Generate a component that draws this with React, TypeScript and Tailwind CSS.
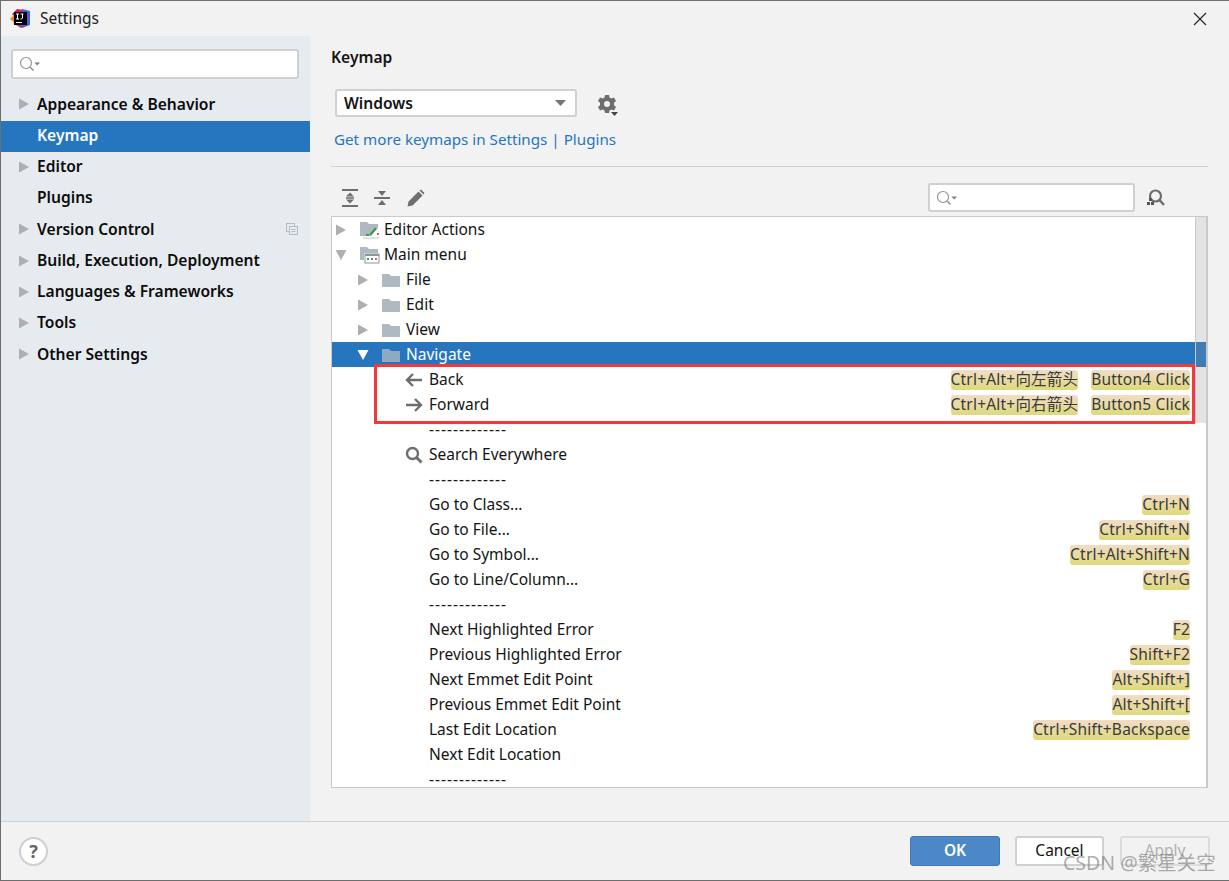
const uiFont = "font-['Noto_Sans','Noto_Sans_CJK_SC',sans-serif]";

const sidebarItems = [
  { label: "Appearance & Behavior", arrow: true },
  { label: "Keymap", selected: true },
  { label: "Editor", arrow: true },
  { label: "Plugins" },
  { label: "Version Control", arrow: true, copy: true },
  { label: "Build, Execution, Deployment", arrow: true },
  { label: "Languages & Frameworks", arrow: true },
  { label: "Tools", arrow: true },
  { label: "Other Settings", arrow: true },
];

type Row = {
  label: string;
  level: 0 | 1 | 2;
  arrow?: "right" | "down";
  icon?: "actions" | "menu" | "folder" | "back" | "forward" | "search";
  selected?: boolean;
  keys?: string[];
};

const rows: Row[] = [
  { label: "Editor Actions", level: 0, arrow: "right", icon: "actions" },
  { label: "Main menu", level: 0, arrow: "down", icon: "menu" },
  { label: "File", level: 1, arrow: "right", icon: "folder" },
  { label: "Edit", level: 1, arrow: "right", icon: "folder" },
  { label: "View", level: 1, arrow: "right", icon: "folder" },
  { label: "Navigate", level: 1, arrow: "down", icon: "folder", selected: true },
  { label: "Back", level: 2, icon: "back", keys: ["Ctrl+Alt+向左箭头", "Button4 Click"] },
  { label: "Forward", level: 2, icon: "forward", keys: ["Ctrl+Alt+向右箭头", "Button5 Click"] },
  { label: "-------------", level: 2 },
  { label: "Search Everywhere", level: 2, icon: "search" },
  { label: "-------------", level: 2 },
  { label: "Go to Class...", level: 2, keys: ["Ctrl+N"] },
  { label: "Go to File...", level: 2, keys: ["Ctrl+Shift+N"] },
  { label: "Go to Symbol...", level: 2, keys: ["Ctrl+Alt+Shift+N"] },
  { label: "Go to Line/Column...", level: 2, keys: ["Ctrl+G"] },
  { label: "-------------", level: 2 },
  { label: "Next Highlighted Error", level: 2, keys: ["F2"] },
  { label: "Previous Highlighted Error", level: 2, keys: ["Shift+F2"] },
  { label: "Next Emmet Edit Point", level: 2, keys: ["Alt+Shift+]"] },
  { label: "Previous Emmet Edit Point", level: 2, keys: ["Alt+Shift+["] },
  { label: "Last Edit Location", level: 2, keys: ["Ctrl+Shift+Backspace"] },
  { label: "Next Edit Location", level: 2 },
  { label: "-------------", level: 2 },
];

function Arrow({ dir, light }: { dir: "right" | "down"; light?: boolean }) {
  return (
    <svg width="12" height="12" viewBox="0 0 12 12">
      <path d={dir === "right" ? "M1 0.5 L11 6 L1 11.5Z" : "M0.5 1 L11.5 1 L6 11Z"} fill={light ? "#ffffff" : "#afafaf"} />
    </svg>
  );
}

function SearchBox({ className }: { className: string }) {
  return (
    <div className={`flex items-center rounded-[3px] border-2 border-[#d0d0d0] bg-white pl-[6px] ${className}`}>
      <svg width="22" height="18" viewBox="0 0 22 18" fill="none">
        <circle cx="7" cy="8" r="5.5" stroke="#8d969c" strokeWidth="1.2" />
        <path d="M11 12 L14.5 15.5" stroke="#8d969c" strokeWidth="1.6" />
        <path d="M15.5 7.5 H21 L18.2 10.5Z" fill="#7f7f7f" />
      </svg>
    </div>
  );
}

function TreeIcon({ icon, selected }: { icon: NonNullable<Row["icon"]>; selected?: boolean }) {
  if (icon === "folder") {
    return (
      <svg width="18" height="16" viewBox="0 0 18 16">
        <path d="M0 2 H7 L9 4 H18 V15 H0Z" fill={selected ? "#8fa9c2" : "#aeb9c0"} />
      </svg>
    );
  }
  if (icon === "actions") {
    return (
      <svg width="20" height="18" viewBox="0 0 20 18" fill="none">
        <path d="M0 1 H7 L9 3 H18 V7 L11 15 H0Z" fill="#aeb9c0" />
        <path d="M6 14 L9 14 M10 14 L16 7" stroke="#3d9c48" strokeWidth="2" />
        <path d="M17 12 H19 V14 H17Z" fill="#e0703a" />
        <path d="M3 17 H19" stroke="#c0c6ca" strokeWidth="1" />
      </svg>
    );
  }
  if (icon === "menu") {
    return (
      <svg width="20" height="18" viewBox="0 0 20 18" fill="none">
        <path d="M0 1 H7 L9 3 H18 V7 H4 V14 H0Z" fill="#aeb9c0" />
        <rect x="5" y="8" width="14" height="9" fill="#ffffff" stroke="#8d969c" />
        <path d="M5 8 H19 V10 H5Z" fill="#8d969c" />
        <rect x="7" y="12" width="2" height="2" fill="#3d9c48" />
        <rect x="11" y="12" width="2" height="2" fill="#4a86c8" />
        <rect x="15" y="12" width="2" height="2" fill="#e0703a" />
      </svg>
    );
  }
  if (icon === "search") {
    return (
      <svg width="18" height="18" viewBox="0 0 18 18" fill="none" stroke="#6e6e6e">
        <circle cx="7.5" cy="7.5" r="5.5" strokeWidth="2.4" />
        <path d="M11.5 11.5 L16.5 16.5" strokeWidth="3" />
      </svg>
    );
  }
  return (
    <svg width="18" height="14" viewBox="0 0 18 14" fill="none" stroke="#6e6e6e" strokeWidth="2.4">
      {icon === "back" ? <path d="M17 7 H2 M8 1 L2 7 L8 13" /> : <path d="M1 7 H16 M10 1 L16 7 L10 13" />}
    </svg>
  );
}

function TreeRow({ row }: { row: Row }) {
  const indent = row.level === 0 ? "pl-0" : row.level === 1 ? "pl-[22px]" : "pl-[45px]";
  const isSeparator = row.label.startsWith("-");
  return (
    <div className={`flex h-[25px] shrink-0 items-center pr-[5px] ${indent} ${row.selected ? "-mr-[12px] bg-[#2675bf] text-white" : "text-[#141414]"}`}>
      <span className="flex w-[22px] shrink-0 justify-center pr-[4px]">
        {row.arrow && <Arrow dir={row.arrow} light={row.selected} />}
      </span>
      <span className="flex w-[30px] shrink-0 items-center justify-start pl-[6px]">
        {row.icon && <TreeIcon icon={row.icon} selected={row.selected} />}
      </span>
      <span className={`flex-1 whitespace-nowrap ${isSeparator ? "tracking-[1px]" : ""}`}>{row.label}</span>
      {row.keys && (
        <span className="flex gap-[13px]">
          {row.keys.map((k) => (
            <span key={k} className="h-[20px] whitespace-nowrap rounded-[3px] bg-gradient-to-b from-[#f2dcc6] to-[#ded97a] leading-[19px] tracking-[0.2px] text-[#3a3a3a]">
              {k}
            </span>
          ))}
        </span>
      )}
    </div>
  );
}

export default function App() {
  return (
    <div className={`relative flex h-[881px] w-[1229px] flex-col overflow-hidden border-y border-l border-[#6e6e6e] bg-[#f2f2f2] text-[15.5px] text-[#141414] ${uiFont}`}>
      <div className="flex h-[35px] shrink-0 items-center bg-[#f2f2f2] pl-[9px] pr-[22px]">
        <svg width="21" height="21" viewBox="0 0 21 21">
          <path d="M2 6 L7 1 L14 2 L8 12Z" fill="#e3145f" />
          <path d="M12 1 L20 3 L20 17 L12 20Z" fill="#3f63d8" />
          <path d="M0 11 L4 7 L6 16Z" fill="#f58220" />
          <path d="M3 15 L11 20 L15 18Z" fill="#b32a8f" />
          <rect x="4" y="4" width="13" height="13" fill="#000000" />
          <rect x="6" y="14" width="6" height="1" fill="#ffffff" />
          <path d="M6 6 H9 M7.5 6 V11 M6 11 H9 M10.5 6 H13.5 M12.5 6 V10 Q12.5 11 10.5 11" stroke="#ffffff" strokeWidth="1" fill="none" />
        </svg>
        <span className="ml-[9px] flex-1 text-[#222222]">Settings</span>
        <svg width="14" height="14" viewBox="0 0 14 14" stroke="#2c2c2c" strokeWidth="1.3">
          <path d="M1 1 L13 13 M13 1 L1 13" />
        </svg>
      </div>

      <div className="flex min-h-0 flex-1">
        <aside className="flex w-[309px] shrink-0 flex-col bg-[#e6ebf0]">
          <SearchBox className="ml-[10px] mr-[11px] mt-[13px] h-[30px]" />
          <div className="mt-[10.75px] flex flex-col">
            {sidebarItems.map((item) => (
              <div key={item.label} className={`flex h-[31.25px] items-center pb-[2px] pr-[12px] text-[15.6px] font-semibold ${item.selected ? "bg-[#2675bf] text-white" : "text-[#0c0c0c]"}`}>
                <span className="flex w-[36px] shrink-0 justify-start pl-[17px]">
                  {item.arrow && <Arrow dir="right" />}
                </span>
                <span className="flex-1 whitespace-nowrap">{item.label}</span>
                {item.copy && (
                  <svg width="12" height="12" viewBox="0 0 12 12" fill="none" stroke="#b4bcc2">
                    <rect x="0.5" y="0.5" width="8" height="8" />
                    <rect x="3.5" y="3.5" width="8" height="8" fill="#e6ebf0" />
                    <path d="M5.5 6.5 H9.5 M5.5 8.5 H9.5" />
                  </svg>
                )}
              </div>
            ))}
          </div>
        </aside>

        <main className="flex min-w-0 flex-1 flex-col pl-[21px] pr-[21px]">
          <div className="mt-[9px] h-[24px] text-[15.6px] font-semibold leading-[24px]">Keymap</div>
          <div className="mt-[20px] flex items-center pl-[4px]">
            <div className="flex h-[28px] w-[242px] items-center justify-between rounded-[3px] border-2 border-[#d0d0d0] bg-white pl-[7px] pr-[8px] pt-[1px] text-[15.6px] font-semibold">
              <span>Windows</span>
              <svg width="12" height="8" viewBox="0 0 12 8"><path d="M0 0 H11 L5.5 6Z" fill="#757575" /></svg>
            </div>
            <svg className="ml-[21px] mt-[4px]" width="20" height="22" viewBox="0 0 20 22" fill="#6e6e6e">
              <path fillRule="evenodd" d="M7 1 H11 L11.5 3.5 L13.5 4.5 L16 3.5 L18 7 L16 8.7 V11.3 L18 13 L16 16.5 L13.5 15.5 L11.5 16.5 L11 19 H7 L6.5 16.5 L4.5 15.5 L2 16.5 L0 13 L2 11.3 V8.7 L0 7 L2 3.5 L4.5 4.5 L6.5 3.5Z M9 7 A3 3 0 1 0 9 13 A3 3 0 1 0 9 7Z" />
              <path d="M13 18 H20 L16.5 22Z" fill="#444444" />
            </svg>
          </div>
          <div className="mt-[10px] h-[24px] pl-[3px] text-[15.2px] leading-[24px] text-[#2675bf]">Get more keymaps in Settings | Plugins</div>
          <div className="mt-[15px] h-px bg-[#d1d1d1]" />

          <div className="mt-[16px] flex h-[29px] items-center">
            <div className="flex flex-1 items-center gap-[15px] pl-[10px]">
              <svg width="18" height="20" viewBox="0 0 18 20" fill="#6e6e6e">
                <path d="M1 1 H17 V3 H1Z M1 17 H17 V19 H1Z M9 4.5 L13 8.5 H5Z M9 15.5 L13 11.5 H5Z M5 9.3 H13 V10.7 H5Z" />
              </svg>
              <svg width="16" height="18" viewBox="0 0 16 18" fill="#6e6e6e">
                <path d="M0 8 H16 V10 H0Z M8 7 L4 2 H12Z M8 11 L12 16 H4Z" />
              </svg>
              <svg className="ml-[2px]" width="18" height="18" viewBox="0 0 18 18" fill="#6e6e6e">
                <path d="M0.5 17.5 L1.5 12.5 L11.5 2.5 L15.5 6.5 L5.5 16.5Z M12.5 1.5 L14 0.5 L17.5 4 L16.5 5.5Z" />
              </svg>
            </div>
            <SearchBox className="h-[29px] w-[207px]" />
            <svg className="ml-[11px] mr-[42px]" width="20" height="20" viewBox="0 0 20 20" fill="none">
              <circle cx="9.5" cy="8" r="5.5" stroke="#6e6e6e" strokeWidth="2.2" />
              <path d="M13.5 12 L18 17" stroke="#6e6e6e" strokeWidth="2.6" />
              <rect x="1" y="14" width="3" height="3" fill="#555555" />
              <rect x="5" y="14" width="3" height="3" fill="#555555" />
              <rect x="3" y="10" width="3" height="3" fill="#555555" />
            </svg>
          </div>

          <div className="relative mt-[4px] h-[572px] overflow-hidden border border-r-2 border-[#c9c9c9] bg-white">
            <div className="flex h-full flex-col pr-[11px]">
              {rows.map((r, i) => <TreeRow key={i} row={r} />)}
            </div>
            <div className="absolute right-0 top-0 h-[206px] w-[11px] border-l border-[#c9c9c9] bg-[#8f8f8f]/25" />
            <div className="absolute left-[42px] top-[147px] h-[60px] w-[821px] border-[3px] border-[#f4373b]" />
          </div>
        </main>
      </div>

      <footer className="flex h-[59px] shrink-0 items-center border-t border-[#d1d1d1] pl-[18px] pr-[19px]">
        <div className="flex h-[29px] w-[29px] items-center justify-center rounded-full border-2 border-[#cfcfcf] bg-white text-[18px] font-bold text-[#666666]">?</div>
        <div className="flex flex-1 justify-end">
          <button className="h-[30px] w-[90px] rounded-[3px] border border-[#3f78b8] bg-[#4c88c8] font-semibold text-white">OK</button>
          <button className="ml-[15px] h-[30px] w-[89px] rounded-[3px] border-2 border-[#d0d0d0] bg-white text-[#111111]">Cancel</button>
          <button className="ml-[16px] h-[30px] w-[90px] rounded-[3px] border-2 border-[#dcdcdc] bg-[#f2f2f2] text-[#b0b0b0]">Apply</button>
        </div>
      </footer>

      <div className="absolute left-[1062px] top-[847px] whitespace-nowrap text-[19.5px] text-[#77777799]">CSDN @繁星关空</div>
    </div>
  );
}
